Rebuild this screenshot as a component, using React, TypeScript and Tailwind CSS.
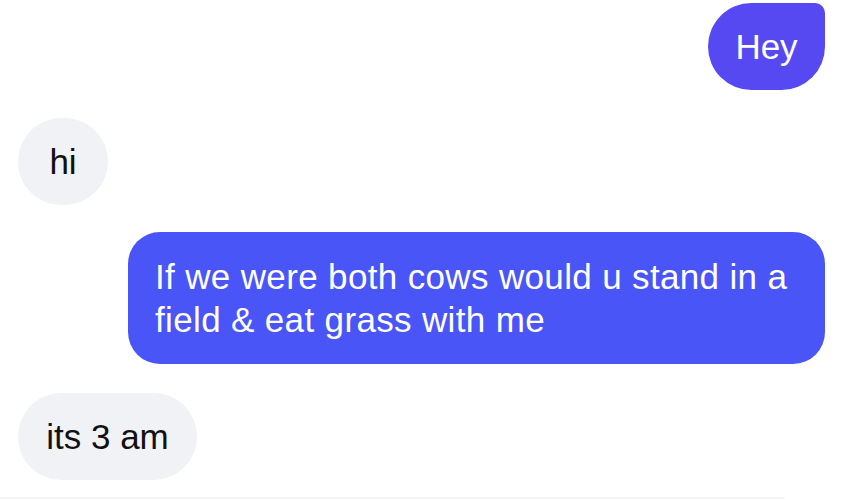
const font = { fontFamily: '"Liberation Sans", Arial, sans-serif' };

export default function App() {
  return (
    <div className="h-[500px] w-[843px] overflow-hidden bg-white pt-[3px]" style={font}>
      <div className="flex justify-end pr-[18px]">
        <div className="flex h-[87px] w-[117px] items-center justify-center rounded-[44px] rounded-tr-[10px] bg-[#5749f2] text-[35px] leading-none text-white">
          Hey
        </div>
      </div>

      <div className="mt-[28px] pl-[18px]">
        <div className="flex h-[87px] w-[90px] items-center justify-center rounded-full bg-[#f1f2f6] text-[35px] leading-none text-[#111]">
          hi
        </div>
      </div>

      <div className="mt-[27px] flex justify-end pr-[18px]">
        <div className="h-[132px] w-[697px] rounded-[32px] bg-[#4a55f7] px-[27px] py-[23px] text-[35px] leading-[43px] tracking-[0.35px] text-white">
          If we were both cows would u stand in a field &amp; eat grass with me
        </div>
      </div>

      <div className="mt-[29px] pl-[18px]">
        <div className="flex h-[87px] w-[179px] items-center justify-center rounded-full bg-[#f1f2f6] text-[35px] leading-none text-[#111]">
          its 3 am
        </div>
      </div>

      <div className="mt-[17px] h-[2px] w-[785px] bg-[#f4f4f6]" />
    </div>
  );
}
